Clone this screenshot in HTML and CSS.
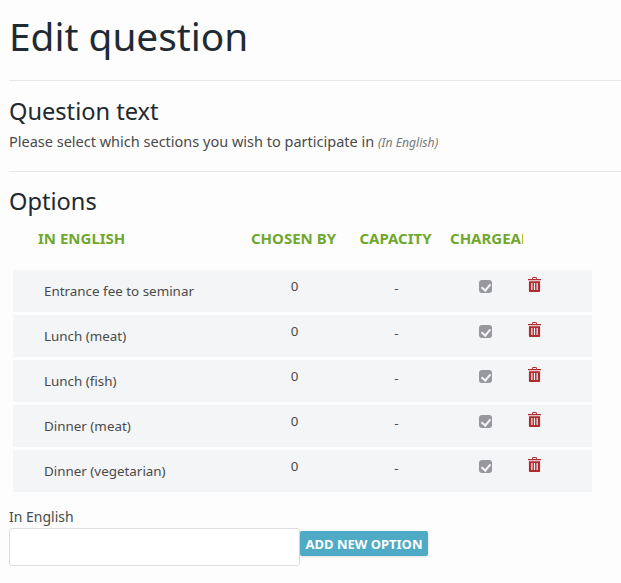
FILE: index.html
```html
<!DOCTYPE html>
<html lang="en">
<head>
    <meta charset="UTF-8">
    <meta name="viewport" content="width=device-width, initial-scale=1.0">
    <title>Edit question</title>
    <link rel="stylesheet" href="styles.css">
</head>
<body>
    <h1 class="page-title">Edit question</h1>
    <hr class="divider">

    <h2 class="section-title">Question text</h2>
    <p class="question-text">Please select which sections you wish to participate in <em class="lang-note">(In English)</em></p>
    <hr class="divider divider-second">

    <h2 class="section-title options-title">Options</h2>
    <table class="options-table">
        <colgroup>
            <col class="col-name">
            <col class="col-chosen">
            <col class="col-capacity">
            <col class="col-charge">
            <col class="col-delete">
        </colgroup>
        <thead>
            <tr>
                <th class="head-name">In English</th>
                <th><div class="head-clip">Chosen by</div></th>
                <th><div class="head-clip">Capacity</div></th>
                <th><div class="head-clip">Chargeable</div></th>
                <th></th>
            </tr>
        </thead>
        <tbody>
            <tr>
                <td class="cell-name">Entrance fee to seminar</td>
                <td class="cell-num">0</td>
                <td class="cell-dash">-</td>
                <td class="cell-check"><input type="checkbox" class="charge-box" checked disabled></td>
                <td class="cell-delete"><svg class="trash" viewBox="0 0 14 16"><path d="M5 0h4l1 2h4v1.500H0V2h4zM5.500 1 5 2h4l-.5-1zM1 4.500h12V15a1 1 0 0 1-1 1H2a1 1 0 0 1-1-1zM3.500 6.500v7.500h1.300V6.500zM6.350 6.500v7.500h1.300V6.500zM9.200 6.500v7.500h1.300V6.500z" fill-rule="evenodd"/></svg></td>
            </tr>
            <tr>
                <td class="cell-name">Lunch (meat)</td>
                <td class="cell-num">0</td>
                <td class="cell-dash">-</td>
                <td class="cell-check"><input type="checkbox" class="charge-box" checked disabled></td>
                <td class="cell-delete"><svg class="trash" viewBox="0 0 14 16"><path d="M5 0h4l1 2h4v1.500H0V2h4zM5.500 1 5 2h4l-.5-1zM1 4.500h12V15a1 1 0 0 1-1 1H2a1 1 0 0 1-1-1zM3.500 6.500v7.500h1.300V6.500zM6.350 6.500v7.500h1.300V6.500zM9.200 6.500v7.500h1.300V6.500z" fill-rule="evenodd"/></svg></td>
            </tr>
            <tr>
                <td class="cell-name">Lunch (fish)</td>
                <td class="cell-num">0</td>
                <td class="cell-dash">-</td>
                <td class="cell-check"><input type="checkbox" class="charge-box" checked disabled></td>
                <td class="cell-delete"><svg class="trash" viewBox="0 0 14 16"><path d="M5 0h4l1 2h4v1.500H0V2h4zM5.500 1 5 2h4l-.5-1zM1 4.500h12V15a1 1 0 0 1-1 1H2a1 1 0 0 1-1-1zM3.500 6.500v7.500h1.300V6.500zM6.350 6.500v7.500h1.300V6.500zM9.200 6.500v7.500h1.300V6.500z" fill-rule="evenodd"/></svg></td>
            </tr>
            <tr>
                <td class="cell-name">Dinner (meat)</td>
                <td class="cell-num">0</td>
                <td class="cell-dash">-</td>
                <td class="cell-check"><input type="checkbox" class="charge-box" checked disabled></td>
                <td class="cell-delete"><svg class="trash" viewBox="0 0 14 16"><path d="M5 0h4l1 2h4v1.500H0V2h4zM5.500 1 5 2h4l-.5-1zM1 4.500h12V15a1 1 0 0 1-1 1H2a1 1 0 0 1-1-1zM3.500 6.500v7.500h1.300V6.500zM6.350 6.500v7.500h1.300V6.500zM9.200 6.500v7.500h1.300V6.500z" fill-rule="evenodd"/></svg></td>
            </tr>
            <tr>
                <td class="cell-name">Dinner (vegetarian)</td>
                <td class="cell-num">0</td>
                <td class="cell-dash">-</td>
                <td class="cell-check"><input type="checkbox" class="charge-box" checked disabled></td>
                <td class="cell-delete"><svg class="trash" viewBox="0 0 14 16"><path d="M5 0h4l1 2h4v1.500H0V2h4zM5.500 1 5 2h4l-.5-1zM1 4.500h12V15a1 1 0 0 1-1 1H2a1 1 0 0 1-1-1zM3.500 6.500v7.500h1.300V6.500zM6.350 6.500v7.500h1.300V6.500zM9.200 6.500v7.500h1.300V6.500z" fill-rule="evenodd"/></svg></td>
            </tr>
        </tbody>
    </table>

    <form class="add-form">
        <label class="add-label" for="new-option">In English</label>
        <div class="add-row">
            <input type="text" id="new-option" class="add-input">
            <button type="button" class="add-btn">Add new option</button>
        </div>
    </form>
</body>
</html>
```

FILE: styles.css
```css
* {
    margin: 0;
    padding: 0;
    box-sizing: border-box;
}

body {
    font-family: 'Noto Sans', sans-serif;
    background: #fdfdfd;
    color: #4a4a4a;
    padding: 0 0 0 9px;
    overflow: hidden;
}

.page-title {
    font-size: 38.800px;
    font-weight: 400;
    line-height: 52px;
    color: #1f2a33;
    padding-top: 10px;
}

.divider {
    border: none;
    border-top: 1px solid #e8e8e8;
    margin-top: 18px;
}

.divider-second {
    margin-top: 18px;
}

.section-title {
    font-size: 23.600px;
    font-weight: 400;
    line-height: 32px;
    color: #22292f;
    margin-top: 14px;
}

.options-title {
    margin-top: 13px;
}

.question-text {
    font-size: 14.500px;
    line-height: 20px;
    margin-top: 4px;
}

.lang-note {
    font-size: 12.200px;
    color: #777;
}

.options-table {
    table-layout: fixed;
    width: 579px;
    margin-left: 4px;
    margin-top: 2px;
    border-collapse: separate;
    border-spacing: 0 3px;
}

.col-name { width: 230px; }
.col-chosen { width: 101px; }
.col-capacity { width: 103px; }
.col-charge { width: 76px; }
.col-delete { width: 69px; }

.options-table th {
    height: 45px;
    font-size: 15px;
    font-weight: 700;
    text-transform: uppercase;
    color: #6fa82f;
    text-align: center;
    vertical-align: top;
    padding-top: 6px;
    line-height: 20px;
}

.options-table .head-name {
    text-align: left;
    padding-left: 25px;
}

.head-clip {
    white-space: nowrap;
    overflow: hidden;
}

.options-table th:nth-child(4) .head-clip {
    text-align: left;
    padding-left: 3px;
}

.options-table td {
    height: 42px;
    background: #f4f5f7;
    font-size: 13.400px;
    line-height: 20px;
}

.cell-name {
    padding-left: 31px;
    vertical-align: middle;
}

.cell-num,
.cell-dash,
.cell-check {
    text-align: center;
    vertical-align: top;
}

.cell-num {
    padding: 6px 0 0 2px;
}

.cell-dash {
    padding: 8px 0 0 2px;
}

.cell-check {
    padding-top: 10px;
}

.charge-box {
    appearance: none;
    position: relative;
    display: block;
    width: 13px;
    height: 13px;
    margin: 0 auto;
    border-radius: 3px;
    background: #97979c;
}

.charge-box::after {
    content: '';
    position: absolute;
    left: 4px;
    top: 2px;
    width: 4px;
    height: 7px;
    border: solid #f4f5f7;
    border-width: 0 2px 2px 0;
    transform: rotate(40deg);
}

.cell-delete {
    vertical-align: top;
    padding: 7px 0 0 5px;
}

.trash {
    display: block;
    width: 13px;
    height: 15px;
    fill: #b02a30;
}

.add-form {
    margin-top: 12px;
}

.add-label {
    display: block;
    font-size: 14px;
    line-height: 20px;
}

.add-row {
    display: flex;
    align-items: flex-start;
    margin-top: 1px;
}

.add-input {
    width: 291px;
    height: 38px;
    border: 1px solid #ddd;
    border-radius: 3px;
    background: #fff;
}

.add-btn {
    height: 25px;
    width: 128px;
    margin-top: 3px;
    border: none;
    border-radius: 2px;
    background: #4eaac5;
    color: #fff;
    font-family: inherit;
    font-size: 13px;
    font-weight: 700;
    text-transform: uppercase;
    box-shadow: 0 1px 3px rgba(0, 0, 0, 0.12);
}
```
